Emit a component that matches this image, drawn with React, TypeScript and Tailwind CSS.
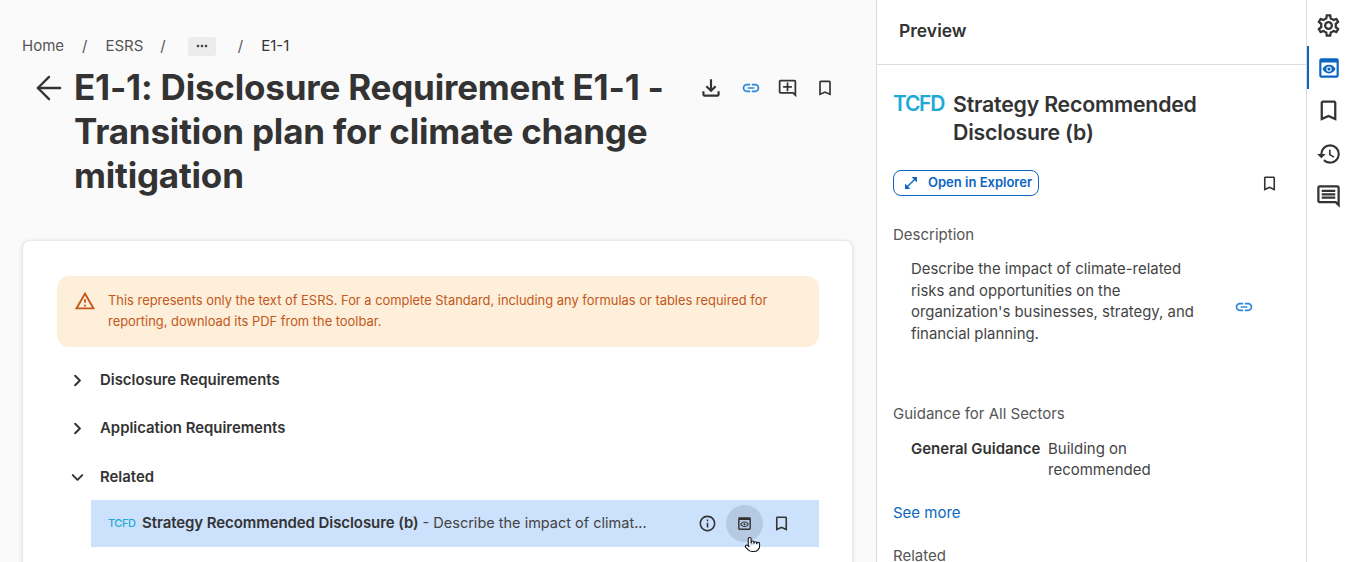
import React from 'react'
import { ArrowLeft, ChevronRight, ChevronDown, Pointer } from 'lucide-react'
import {
  MdOutlineFileDownload,
  MdOutlineLink,
  MdOutlineAddComment,
  MdOutlineBookmarkBorder,
  MdOutlineSettings,
  MdPreview,
  MdOutlinePreview,
  MdOutlineHistory,
  MdOutlineComment,
  MdOutlineInfo,
  MdOutlineWarningAmber,
  MdOutlineOpenInFull,
  MdMoreHoriz,
} from 'react-icons/md'

const font = { fontFamily: '"Inter", "Liberation Sans", sans-serif' }

function Logo({ className }: { className: string }) {
  return <span className={`text-[#1fa9d6] leading-none ${className}`}>TCFD</span>
}

function Section({ label, y }: { label: string; y: string }) {
  return (
    <div className={`flex items-center gap-[13px] pl-[11px] ${y}`}>
      <ChevronRight className="w-[19px] h-[19px] text-[#333]" strokeWidth={2.5} />
      <span className="text-[14.9px] font-semibold text-[#333]">{label}</span>
    </div>
  )
}

function Main() {
  return (
    <div className="w-[876px] shrink-0 bg-[#fafafa] pl-[22px] pr-[23px] pt-[35px]">
      <div className="flex items-center h-[22px] text-[15px] text-[#555]">
        <span>Home</span>
        <span className="ml-[18px]">/</span>
        <span className="ml-[18px]">ESRS</span>
        <span className="ml-[17px]">/</span>
        <span className="ml-[22px] w-[28px] h-[19px] bg-[#ececec] rounded-[3px] flex items-center justify-center">
          <MdMoreHoriz className="w-[16px] h-[16px] text-[#444]" />
        </span>
        <span className="ml-[22px]">/</span>
        <span className="ml-[18px] text-[#333]">E1-1</span>
      </div>

      <div className="flex mt-[8px]">
        <ArrowLeft className="w-[38px] h-[38px] mt-[4px] ml-[8px] text-[#333] shrink-0" strokeWidth={1.5} />
        <h1 className="ml-[6px] w-[600px] text-[35px] leading-[44px] font-bold text-[#333] tracking-[-0.2px]">
          E1-1: Disclosure Requirement E1-1 - Transition plan for climate change mitigation
        </h1>
        <div className="flex items-center h-[44px] mt-[1px] ml-[24px] text-[#333]">
          <MdOutlineFileDownload className="w-[26px] h-[26px]" />
          <MdOutlineLink className="w-[20px] h-[20px] ml-[17px] text-[#2b86e0]" />
          <MdOutlineAddComment className="w-[21px] h-[21px] ml-[16px]" />
          <MdOutlineBookmarkBorder className="w-[20px] h-[20px] ml-[17px]" />
        </div>
      </div>

      <div className="mt-[43px] h-[400px] bg-white border border-[#e8e9ee] rounded-lg shadow-[0_1px_4px_rgba(0,0,0,0.12)] pt-[35px] pl-[34px] pr-[33px]">
        <div className="flex h-[71px] bg-[#fdefd9] rounded-xl pl-[17px] pt-[14px] text-[#c4571b] text-[12.9px] leading-[21px]">
          <MdOutlineWarningAmber className="w-[22px] h-[22px] shrink-0" />
          <p className="ml-[12px] w-[680px]">
            This represents only the text of ESRS. For a complete Standard, including any formulas or tables required for reporting, download its PDF from the toolbar.
          </p>
        </div>

        <Section label="Disclosure Requirements" y="mt-[21px] h-[24px]" />
        <Section label="Application Requirements" y="mt-[24px] h-[24px]" />
        <div className="flex items-center gap-[13px] pl-[11px] mt-[25px] h-[24px]">
          <ChevronDown className="w-[19px] h-[19px] text-[#333]" strokeWidth={2.5} />
          <span className="text-[14.9px] font-semibold text-[#333]">Related</span>
        </div>

        <div className="relative flex items-center ml-[34px] mt-[11px] h-[47px] bg-[#cce1fc] pl-[17px]">
          <Logo className="text-[11px] font-medium tracking-[-0.5px] w-[34px]" />
          <p className="w-[557px] truncate text-[15px] text-[#333]">
            <span className="font-semibold tracking-[-0.08px]">Strategy Recommended Disclosure (b)</span>
            <span className="text-[14.5px] text-[#444]"> - Describe the impact of climat...</span>
          </p>
          <MdOutlineInfo className="w-[19px] h-[19px] ml-[-1px] text-[#333]" />
          <span className="ml-[9px] w-[37px] h-[37px] rounded-full bg-[#b5c9e3] flex items-center justify-center">
            <MdOutlinePreview className="w-[17px] h-[17px] text-[#333]" />
          </span>
          <MdOutlineBookmarkBorder className="w-[19px] h-[19px] ml-[9px] text-[#333]" />
          <Pointer className="absolute left-[653px] top-[35px] w-[17px] h-[19px] text-[#111] fill-white" strokeWidth={1.5} />
        </div>
      </div>
    </div>
  )
}

function Preview() {
  return (
    <div className="w-[430px] shrink-0 bg-white border-l border-[#dcdcdc]">
      <div className="h-[65px] border-b border-[#dcdcdc] pl-[22px] pt-[19px] text-[17.5px] leading-[24px] font-semibold text-[#333]">
        Preview
      </div>
      <div className="pl-[16px] pr-[24px]">
        <div className="flex mt-[25px]">
          <Logo className="text-[21px] font-semibold w-[60px] pt-[3px] tracking-[-1.3px]" />
          <h2 className="w-[280px] text-[21.3px] leading-[28px] font-semibold text-[#333] tracking-[-0.2px]">
            Strategy Recommended Disclosure (b)
          </h2>
        </div>

        <div className="flex items-center justify-between mt-[24px] pr-[3px]">
          <button className="flex items-center w-[146px] h-[26px] border border-[#0a66c2] rounded-lg pl-[9px] text-[13px] font-semibold text-[#0a66c2]">
            <MdOutlineOpenInFull className="w-[16px] h-[16px]" />
            <span className="ml-[9px]">Open in Explorer</span>
          </button>
          <MdOutlineBookmarkBorder className="w-[19px] h-[19px] text-[#333]" />
        </div>

        <div className="mt-[27px] text-[15px] leading-[24px] text-[#555]">Description</div>
        <div className="flex mt-[12px]">
          <p className="ml-[18px] w-[290px] text-[14.9px] leading-[21.5px] text-[#444]">
            Describe the impact of climate-related risks and opportunities on the organization's businesses, strategy, and financial planning.
          </p>
          <MdOutlineLink className="w-[20px] h-[20px] ml-[33px] mt-[38px] text-[#2b86e0]" />
        </div>

        <div className="mt-[57px] text-[15px] leading-[24px] text-[#555]">Guidance for All Sectors</div>
        <div className="flex mt-[12px] ml-[18px] text-[15px] leading-[21px]">
          <span className="w-[137px] font-semibold text-[#333]">General Guidance</span>
          <span className="w-[130px] text-[#444]">Building on recommended</span>
        </div>

        <div className="mt-[21px] text-[15px] leading-[24px] text-[#0a66c2]">See more</div>
        <div className="mt-[19px] text-[15px] leading-[24px] text-[#555]">Related</div>
      </div>
    </div>
  )
}

function Rail() {
  return (
    <div className="flex-1 bg-white border-l border-[#dcdcdc] flex flex-col items-center pt-[12px] text-[#333]">
      <MdOutlineSettings className="w-[27px] h-[27px]" />
      <div className="relative w-full flex justify-center mt-[16px]">
        <span className="absolute left-0 top-[-9px] w-[2px] h-[43px] bg-[#0a66c2]" />
        <MdPreview className="w-[26px] h-[26px] text-[#0a66c2]" />
      </div>
      <MdOutlineBookmarkBorder className="w-[27px] h-[27px] mt-[16px]" />
      <MdOutlineHistory className="w-[26px] h-[26px] mt-[17px]" />
      <MdOutlineComment className="w-[27px] h-[27px] mt-[16px]" />
    </div>
  )
}

export default function App() {
  return (
    <div className="flex w-[1350px] h-[562px] overflow-hidden" style={font}>
      <Main />
      <Preview />
      <Rail />
    </div>
  )
}
